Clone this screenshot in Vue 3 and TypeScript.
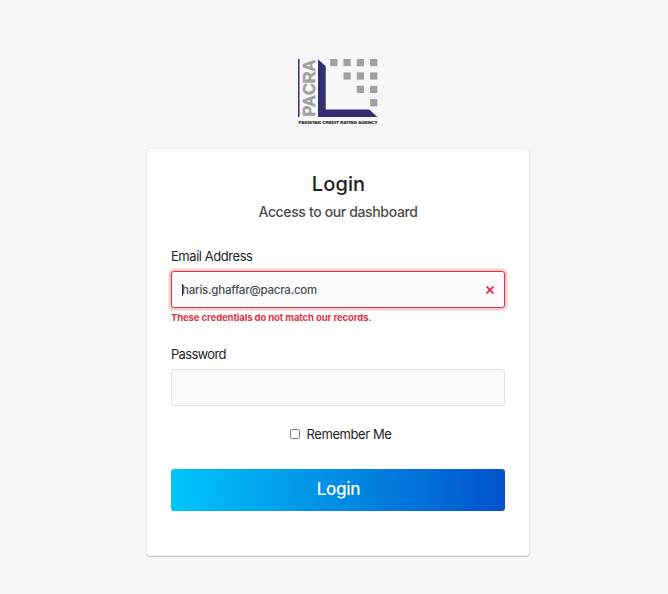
<script setup lang="ts">
import { ref } from 'vue'

const email = ref('haris.ghaffar@pacra.com')
const password = ref('')
const remember = ref(false)

const squares: { x: number; y: number }[] = []
for (let row = 0; row < 4; row++) {
  for (let col = row; col < 4; col++) {
    squares.push({ x: 32.2 + col * 13.3, y: 1 + row * 13.4 })
  }
}
</script>

<template>
  <main class="page">
    <svg class="logo" width="80" height="68" viewBox="0 0 80 68" role="img" aria-label="PACRA">
      <rect x="0" y="1" width="1.5" height="58" fill="#352d72" />
      <text class="logo-name" transform="translate(17 58.6) rotate(-90)" textLength="57" lengthAdjust="spacingAndGlyphs">PACRA</text>
      <path d="M20 1.2 27.7 8.2V51.4H71.3L79.3 59H20Z" fill="#352d72" />
      <rect v-for="(s, i) in squares" :key="i" :x="s.x" :y="s.y" width="7.2" height="7.2" fill="#a0a0a0" />
      <text class="logo-tag" x="0.5" y="66" textLength="79" lengthAdjust="spacingAndGlyphs">PAKISTAN CREDIT RATING AGENCY</text>
    </svg>
    <form class="card" @submit.prevent>
      <h1>Login</h1>
      <p class="subtitle">Access to our dashboard</p>
      <label class="label email-label" for="email">Email Address</label>
      <div class="control invalid">
        <input id="email" v-model="email" type="text" />
        <span class="caret"></span>
        <svg class="cross" width="8" height="8" viewBox="0 0 8 8">
          <path d="M.5.5 7.5 7.5M7.5.5.5 7.5" stroke="#dc3545" stroke-width="1.9" />
        </svg>
      </div>
      <strong class="error">These credentials do not match our records.</strong>
      <label class="label password-label" for="password">Password</label>
      <div class="control">
        <input id="password" v-model="password" type="password" />
      </div>
      <label class="remember">
        <input v-model="remember" type="checkbox" />
        <span>Remember Me</span>
      </label>
      <button type="submit">Login</button>
    </form>
  </main>
</template>

<style>
body {
  margin: 0;
  background: #f7f7f7;
}
</style>

<style scoped>
.page {
  box-sizing: border-box;
  height: 594px;
  padding: 58px 0 0 8px;
  display: flex;
  flex-direction: column;
  align-items: center;
  background: #f7f7f7;
  color: #1f1f1f;
  font-family: Inter, "Liberation Sans", sans-serif;
}
.logo {
  display: block;
  flex: none;
  overflow: visible;
}
.logo-name {
  font: bold 17.3px "Liberation Sans", sans-serif;
  fill: #a0a0a0;
  stroke: #a0a0a0;
  stroke-width: .5px;
}
.logo-tag {
  font: bold 4.2px "Liberation Sans", sans-serif;
  fill: #222;
  stroke: #222;
  stroke-width: .15px;
}
.card {
  box-sizing: border-box;
  width: 384px;
  height: 408px;
  margin-top: 22px;
  padding: 22px 24px 0;
  display: flex;
  flex-direction: column;
  border: 1px solid #ededed;
  border-radius: 4px;
  background: #fff;
  box-shadow: 0 1px 1px rgba(0, 0, 0, .2);
}
h1 {
  margin: 0;
  padding-left: 1px;
  font-size: 20px;
  line-height: 26px;
  font-weight: 500;
  letter-spacing: .1px;
  text-align: center;
}
.subtitle {
  margin: 4px 0 0;
  color: #4c4c4c;
  font-size: 14px;
  line-height: 22px;
  font-weight: 500;
  letter-spacing: -.36px;
  text-align: center;
}
.label {
  font-size: 13px;
  line-height: 20px;
  letter-spacing: -.45px;
}
.email-label {
  margin-top: 23px;
}
.control {
  position: relative;
  box-sizing: border-box;
  height: 37px;
  flex: none;
  margin-top: 5px;
  display: flex;
  align-items: center;
  border: 1px solid #e3e3e3;
  border-radius: 3px;
  background: #fbfbfb;
}
.control.invalid {
  border-color: #dc3545;
  box-shadow: 0 0 0 2.5px rgba(220, 53, 69, .25);
}
.control input {
  flex: 1;
  min-width: 0;
  padding: 0 10px;
  border: 0;
  outline: 0;
  background: transparent;
  color: #495057;
  font: 500 11.5px Inter, sans-serif;
  letter-spacing: -.22px;
}
.caret {
  position: absolute;
  left: 10px;
  top: 12px;
  width: 1px;
  height: 12px;
  background: #333;
}
.cross {
  margin-right: 10px;
}
.error {
  margin-top: 3px;
  color: #dc3545;
  font-size: 9.5px;
  line-height: 13px;
  font-weight: 700;
  letter-spacing: -.1px;
}
.password-label {
  margin-top: 20px;
  letter-spacing: -.68px;
}
.remember {
  align-self: center;
  margin-top: 18px;
  padding-left: 5px;
  display: flex;
  align-items: center;
  gap: 7px;
  font-size: 13px;
  line-height: 20px;
  letter-spacing: -.43px;
}
.remember input {
  appearance: none;
  box-sizing: border-box;
  width: 10px;
  height: 10px;
  margin: 0;
  border: 1px solid #858585;
  border-radius: 2px;
  background: #fff;
}
button {
  height: 42px;
  margin: 25px 0 0;
  padding: 0 0 2px 1px;
  border: 0;
  border-radius: 3px;
  background: linear-gradient(to right, #00c5fb, #0253cc);
  color: #fff;
  font: 500 17px Inter, sans-serif;
  letter-spacing: -.25px;
}
</style>
